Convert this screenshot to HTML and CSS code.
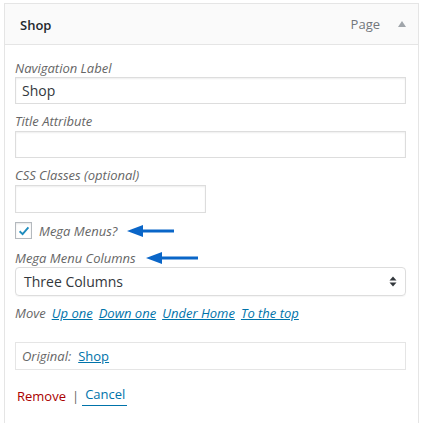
FILE: index.html
```html
<!DOCTYPE html>
<html>
<head>
<meta charset="utf-8">
<link rel="stylesheet" href="styles.css">
</head>
<body>
<div class="item">
  <div class="item-bar">
    <span class="item-title">Shop</span>
    <span class="item-controls">
      <span class="item-type">Page</span>
      <svg class="toggle" width="8" height="6" viewBox="0 0 8 6"><path d="M0 6 L4 0 L8 6 Z" fill="#a0a5aa"/></svg>
    </span>
  </div>
  <div class="item-settings">
    <label class="lbl first">Navigation Label</label>
    <div class="field wide">Shop</div>
    <label class="lbl">Title Attribute</label>
    <div class="field wide"></div>
    <label class="lbl">CSS Classes (optional)</label>
    <div class="field narrow"></div>
    <div class="check-row">
      <span class="checkbox">
        <svg width="14" height="14" viewBox="0 0 14 14"><path d="M2.6 7.3 L5.6 10.1 L11.4 3.4" fill="none" stroke="#1e8cbe" stroke-width="1.9"/></svg>
      </span>
      <span class="lbl-inline">Mega Menus?</span>
      <svg class="arrow a1" width="48" height="12" viewBox="0 0 48 12"><path d="M0 6 L16 0 L16 4.5 L47 4.5 L47 7.5 L16 7.5 L16 12 Z" fill="#0a66c8"/></svg>
    </div>
    <div class="lbl-row">
      <span class="lbl-inline">Mega Menu Columns</span>
      <svg class="arrow a2" width="53" height="12" viewBox="0 0 53 12"><path d="M0 6 L16 0 L16 4.5 L52 4.5 L52 7.5 L16 7.5 L16 12 Z" fill="#0a66c8"/></svg>
    </div>
    <div class="select">
      <span>Three Columns</span>
      <svg width="8" height="11" viewBox="0 0 8 11"><path d="M0.5 4.5 L4 0.5 L7.5 4.5 Z M0.5 6.5 L4 10.5 L7.5 6.5 Z" fill="#32373c"/></svg>
    </div>
    <div class="move">
      <span class="move-lbl">Move</span>
      <a>Up one</a>
      <a>Down one</a>
      <a>Under Home</a>
      <a>To the top</a>
    </div>
    <div class="original">
      <span class="orig-lbl">Original:</span>
      <a>Shop</a>
    </div>
    <div class="actions">
      <a class="remove">Remove</a>
      <span class="sep">|</span>
      <a class="cancel">Cancel</a>
    </div>
  </div>
</div>
</body>
</html>
```
FILE: styles.css
```css
html, body {
  margin: 0;
  padding: 0;
  background: #fff;
  font-family: "Open Sans", "Liberation Sans", sans-serif;
}
.item {
  margin: 3px 0 0 4px;
  width: 415px;
  box-sizing: border-box;
  border: 1px solid #e5e5e5;
  background: #fff;
}
.item-bar {
  height: 40px;
  background: #fafafa;
  border-bottom: 1px solid #e5e5e5;
  display: flex;
  align-items: center;
  justify-content: space-between;
  padding: 0 12px 0 15px;
}
.item-title {
  font-size: 13px;
  font-weight: 600;
  color: #23282d;
  margin-top: 2px;
}
.item-controls {
  display: flex;
  align-items: center;
}
.item-type {
  font-size: 13px;
  color: #72777c;
}
.toggle {
  margin-left: 18px;
}
.item-settings {
  padding: 0 10px 17px 10px;
}
.lbl {
  display: block;
  font-size: 13px;
  font-style: italic;
  color: #666;
  line-height: 18px;
  margin-top: 8px;
  margin-bottom: 1px;
}
.lbl.first {
  margin-top: 14px;
  margin-bottom: 0;
}
.field {
  box-sizing: border-box;
  height: 27px;
  border: 1px solid #ddd;
  box-shadow: inset 0 1px 2px rgba(0,0,0,0.07);
  font-size: 14px;
  color: #32373c;
  line-height: 25px;
  padding: 0 6px;
}
.field.wide { width: 391px; }
.field.narrow { width: 191px; height: 28px; }
.check-row {
  display: flex;
  align-items: center;
  margin-top: 9px;
  height: 17px;
}
.checkbox {
  box-sizing: border-box;
  width: 17px;
  height: 17px;
  border: 1px solid #b4b9be;
  box-shadow: inset 0 1px 2px rgba(0,0,0,0.1);
  display: flex;
  align-items: center;
  justify-content: center;
  margin-right: 7px;
}
.lbl-inline {
  font-size: 13px;
  font-style: italic;
  color: #666;
  line-height: 18px;
}
.a1 { margin-left: 10px; }
.a2 { margin-left: 10px; }
.lbl-row {
  display: flex;
  align-items: center;
  margin-top: 9px;
  height: 19px;
}
.select {
  box-sizing: border-box;
  width: 391px;
  height: 29px;
  border: 1px solid #ddd;
  border-radius: 4px;
  box-shadow: 0 1px 1px rgba(0,0,0,0.04);
  display: flex;
  align-items: center;
  justify-content: space-between;
  padding: 0 8px 0 8px;
  font-size: 14px;
  color: #32373c;
}
.move {
  margin-top: 8px;
  font-size: 13px;
  line-height: 18px;
  display: flex;
  gap: 6px;
}
.move-lbl {
  font-style: italic;
  color: #666;
}
a {
  color: #0073aa;
  text-decoration: underline;
}
.move a { font-style: italic; }
.original {
  box-sizing: border-box;
  width: 391px;
  height: 28px;
  margin-top: 20px;
  border: 1px solid #e5e5e5;
  display: flex;
  align-items: center;
  padding: 0 6px;
  font-size: 13px;
  gap: 7px;
}
.orig-lbl {
  font-style: italic;
  color: #666;
}
.actions {
  margin-top: 15px;
  padding-left: 2px;
  font-size: 13px;
  line-height: 18px;
  display: flex;
  align-items: center;
}
.remove {
  color: #a00;
  text-decoration: none;
}
.sep {
  color: #666;
  margin: 0 3px 0 6px;
}
.cancel {
  text-decoration: none;
  border-bottom: 1px solid #0073aa;
  padding: 0 2px 2px 3px;
}
```
